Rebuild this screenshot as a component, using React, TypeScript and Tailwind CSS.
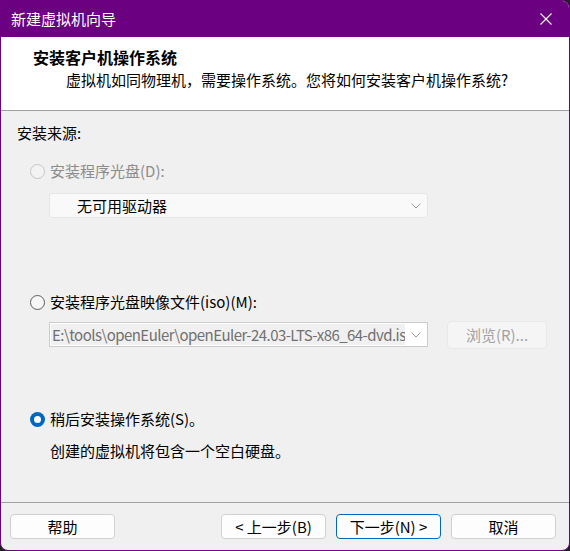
import React from "react";

const font = { fontFamily: '"Noto Sans CJK SC", "Noto Sans", sans-serif' };

function Chevron() {
  return (
    <svg width="10" height="6" viewBox="0 0 10 6" className="shrink-0">
      <path d="M0.5 0.5 L5 5 L9.5 0.5" fill="none" stroke="#9a9a9a" strokeWidth="1" />
    </svg>
  );
}

function Radio({ state }: { state: "disabled" | "off" | "on" }) {
  if (state === "on") {
    return (
      <div className="w-[15px] h-[15px] rounded-full bg-[#0067c0] flex items-center justify-center shrink-0">
        <div className="w-[7px] h-[7px] rounded-full bg-white" />
      </div>
    );
  }
  return (
    <div
      className={
        "w-[15px] h-[15px] rounded-full border shrink-0 " +
        (state === "disabled" ? "border-[#c6c6c6] bg-[#f3f3f3]" : "border-[#5c5c5c] bg-[#f7f7f7]")
      }
    />
  );
}

function Button({ label, primary }: { label: string; primary?: boolean }) {
  return (
    <div
      className={
        "w-[105px] h-[25px] rounded-[4px] bg-[#fdfdfd] border flex items-center justify-center text-[15px] leading-none text-black " +
        (primary ? "border-[#0067c0]" : "border-[#d0d0d0]")
      }
    >
      {label}
    </div>
  );
}

export default function App() {
  return (
    <div className="w-[570px] h-[551px] bg-[#1f1f1f]" style={font}>
      <div className="w-full h-full flex flex-col border border-[#6b0080] rounded-tr-[8px] rounded-b-[8px] overflow-hidden bg-[#f0f0f0]">
        {/* title bar */}
        <div className="h-[36px] bg-[#6b0080] flex items-center justify-between pl-[10px] pr-[17px] shrink-0">
          <span className="text-white text-[15px] leading-[20px]">新建虚拟机向导</span>
          <svg width="12" height="12" viewBox="0 0 12 12">
            <path d="M0.5 0.5 L11.5 11.5 M11.5 0.5 L0.5 11.5" stroke="#ffffff" strokeWidth="1.1" />
          </svg>
        </div>

        {/* page header */}
        <div className="h-[74px] bg-white border-b border-[#a0a0a0] pt-[10px] shrink-0">
          <div className="pl-[32px] text-[16px] font-bold leading-[20px] text-black">安装客户机操作系统</div>
          <div className="pl-[65px] mt-[3px] text-[15px] leading-[20px] text-black">
            虚拟机如同物理机，需要操作系统。您将如何安装客户机操作系统?
          </div>
        </div>

        {/* body */}
        <div className="flex-1 flex flex-col pt-[12px] pl-[16px] text-[15px] leading-[20px] text-black">
          <div>安装来源:</div>

          <div className="mt-[18px] ml-[13px] flex items-center gap-[5px] text-[#8c8c8c]">
            <Radio state="disabled" />
            <span>安装程序光盘(D):</span>
          </div>
          <div className="mt-[12px] ml-[32px] w-[379px] h-[25px] bg-[#f9f9f9] border border-[#e6e6e6] rounded-[3px] flex items-center pl-[27px] pr-[6px]">
            <span className="flex-1">无可用驱动器</span>
            <Chevron />
          </div>

          <div className="mt-[74px] ml-[13px] flex items-center gap-[5px]">
            <Radio state="off" />
            <span>安装程序光盘映像文件(iso)(M):</span>
          </div>
          <div className="mt-[10px] ml-[32px] h-[25px] flex items-start gap-[19px]">
            <div className="w-[379px] h-[25px] bg-white border border-[#cccccc] flex items-center pl-[1px] pr-[6px]">
              <div className="flex-1 h-[21px] bg-[#f0f0f0] overflow-hidden whitespace-nowrap text-[#707070] pl-[1px] mr-[6px] text-[15px] leading-[21px] tracking-[-0.55px]">
                E:\tools\openEuler\openEuler-24.03-LTS-x86_64-dvd.iso
              </div>
              <Chevron />
            </div>
            <div className="-mt-[1px] w-[100px] h-[28px] rounded-[4px] bg-[#f5f5f5] border border-[#e8e8e8] flex items-center justify-center text-[#a2a2a2] shrink-0">
              浏览(R)...
            </div>
          </div>

          <div className="mt-[62px] ml-[13px] flex items-center gap-[5px]">
            <Radio state="on" />
            <span>稍后安装操作系统(S)。</span>
          </div>
          <div className="mt-[12px] ml-[33px]">创建的虚拟机将包含一个空白硬盘。</div>
        </div>

        {/* footer */}
        <div className="h-[48px] border-t border-[#a0a0a0] pt-[11px] pl-[9px] flex shrink-0">
          <Button label="帮助" />
          <div className="ml-[106px] flex gap-[10px]">
            <Button label="< 上一步(B)" />
            <Button label="下一步(N) >" primary />
            <Button label="取消" />
          </div>
        </div>
      </div>
    </div>
  );
}
